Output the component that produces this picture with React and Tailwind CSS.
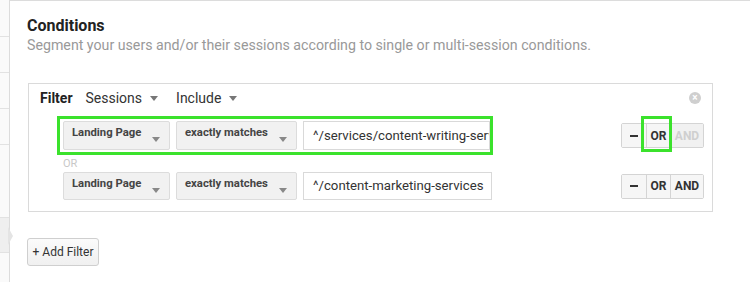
import React from "react";

const Caret = ({ className = "" }) => (
  <span
    className={`inline-block w-0 h-0 border-l-[4px] border-r-[4px] border-t-[5px] border-l-transparent border-r-transparent border-t-[#777] ${className}`}
  />
);

function Dropdown({ label, width, height }) {
  return (
    <div
      className={`flex items-start bg-[#f1f1f1] border border-[#dcdcdc] rounded-[2px] pl-[8px] pr-[9px] pt-[3px] ${width} ${height}`}
    >
      <span className="text-[11.3px] leading-[16px] font-bold text-[#444]">{label}</span>
      <Caret className="ml-auto mt-[12px] !border-t-[#888]" />
    </div>
  );
}

function ValueInput({ value, width, height }) {
  return (
    <div
      className={`flex items-center bg-white border border-[#d9d9d9] pl-[9px] overflow-hidden whitespace-nowrap ${width} ${height}`}
    >
      <span className="text-[13.2px] text-[#333]">{value}</span>
    </div>
  );
}

function Logic({ andDisabled, highlightOr }) {
  return (
    <div className="relative flex h-[25px] mr-[8px] ml-auto border border-[#d4d4d4] rounded-[2px] text-[12px] font-bold">
      <div className="w-[25px] flex items-center justify-center bg-[#f6f6f6] text-[#333] border-r border-[#d4d4d4]">
        <span className="block w-[8px] h-[2px] bg-[#333]" />
      </div>
      <div className="w-[24px] flex items-center justify-center bg-[#f6f6f6] text-[#333] border-r border-[#d4d4d4]">
        OR
      </div>
      <div
        className={`w-[32px] flex items-center justify-center ${
          andDisabled ? "bg-[#f1f1f1] text-[#cfcfcf]" : "bg-[#f6f6f6] text-[#333]"
        }`}
      >
        AND
      </div>
      {highlightOr && (
        <div className="absolute left-[19px] top-[-8px] w-[31px] h-[36px] border-[3px] border-[#3be22c]" />
      )}
    </div>
  );
}

export default function App() {
  return (
    <div
      className="w-[750px] h-[282px] bg-white flex overflow-hidden"
      style={{ fontFamily: "Roboto, 'Liberation Sans', Arial, sans-serif" }}
    >
      {/* side strip */}
      <div className="w-[10px] shrink-0 border-r border-[#dcdcdc] bg-[#fafafa] flex flex-col">
        <div className="h-[37px] border-b border-[#e2e2e2]" />
        <div className="h-[36px] border-b border-[#e2e2e2]" />
        <div className="h-[36px] border-b border-[#e2e2e2]" />
        <div className="h-[36px] border-b border-[#e2e2e2]" />
        <div className="h-[72px]" />
        <div className="relative h-[36px] bg-[#efefef] border-y border-[#e2e2e2]">
          <span className="absolute right-[-4px] top-[9px] w-0 h-0 border-t-[9px] border-b-[9px] border-l-[5px] border-t-transparent border-b-transparent border-l-[#e4e4e4]" />
        </div>
      </div>

      {/* main */}
      <div className="flex-1 border-t border-[#dcdcdc] pl-[17px] pt-[16px]">
        <div className="text-[16px] leading-[18px] font-bold text-[#222]">Conditions</div>
        <div className="text-[14.2px] leading-[20px] text-[#999]">
          Segment your users and/or their sessions according to single or multi-session conditions.
        </div>

        <div className="mt-[28px] ml-[1px] w-[685px] border border-[#dadada] pb-[11px]">
          <div className="flex items-center h-[20px] mt-[4px] pl-[11px]">
            <span className="text-[14px] font-bold text-[#222]">Filter</span>
            <span className="ml-[13px] text-[14px] text-[#333]">Sessions</span>
            <Caret className="ml-[8px]" />
            <span className="ml-[18px] text-[14px] text-[#333]">Include</span>
            <Caret className="ml-[8px]" />
            <span className="ml-auto mr-[11px] w-[12px] h-[12px] rounded-full bg-[#cfcfcf] flex items-center justify-center text-white text-[10px] leading-none font-bold">
              ×
            </span>
          </div>

          <div className="flex items-center mt-[8px]">
            <div className="ml-[28px] flex gap-[6px] border-[3px] border-[#3be22c] pl-[3px] py-[2px]">
              <Dropdown label="Landing Page" width="w-[107px]" height="h-[29px]" />
              <Dropdown label="exactly matches" width="w-[121px]" height="h-[29px]" />
              <ValueInput value="^/services/content-writing-services" width="w-[187px]" height="h-[29px]" />
            </div>
            <Logic andDisabled highlightOr />
          </div>

          <div className="h-[15px] pl-[34px] text-[11px] leading-[15px] text-[#c8c8c8] mt-[1px]">OR</div>

          <div className="flex items-center mt-[1px]">
            <div className="ml-[34px] flex gap-[6px]">
              <Dropdown label="Landing Page" width="w-[107px]" height="h-[28px]" />
              <Dropdown label="exactly matches" width="w-[121px]" height="h-[28px]" />
              <ValueInput value="^/content-marketing-services" width="w-[189px]" height="h-[28px]" />
            </div>
            <Logic />
          </div>
        </div>

        <button className="mt-[26px] h-[28px] w-[72px] border border-[#cfcfcf] rounded-[3px] bg-gradient-to-b from-[#fbfbfb] to-[#f0f0f0] text-[12px] text-[#333] flex items-center justify-center">
          + Add Filter
        </button>
      </div>
    </div>
  );
}
